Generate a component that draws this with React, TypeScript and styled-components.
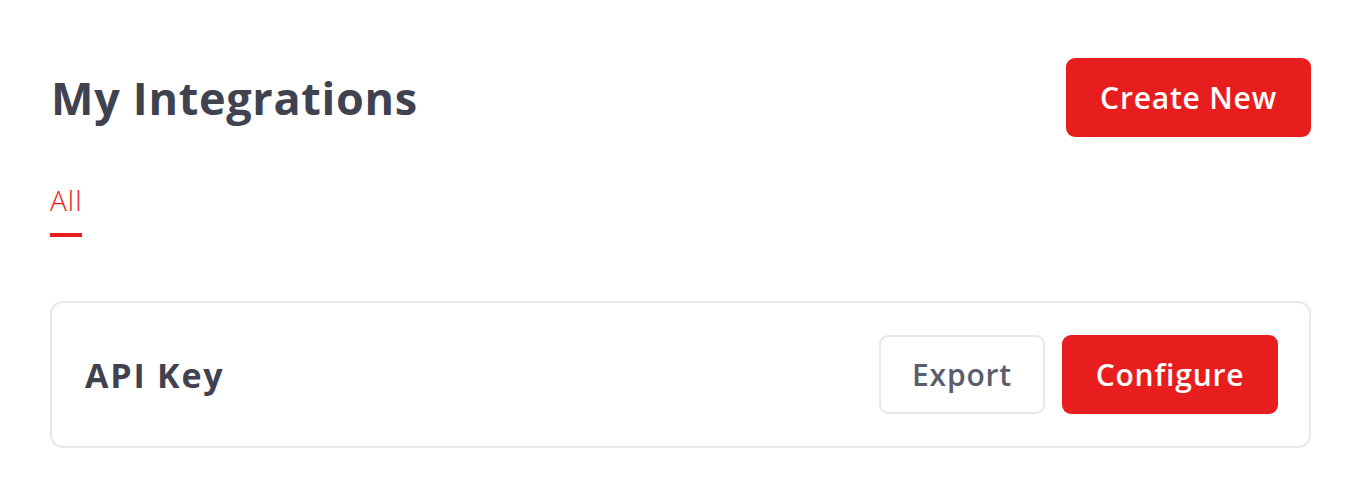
import React from "react";
import styled, { createGlobalStyle } from "styled-components";

const Global = createGlobalStyle`
  html, body { margin: 0; padding: 0; background: #ffffff; }
  body { font-family: "Open Sans", "Noto Sans", sans-serif; -webkit-font-smoothing: antialiased; }
  * { box-sizing: border-box; }
`;

const Page = styled.div`
  padding: 58px 59px 0 50px;
`;

const Header = styled.div`
  display: flex;
  align-items: center;
  justify-content: space-between;
`;

const Title = styled.h1`
  margin: 0;
  padding-left: 1px;
  font-size: 45px;
  font-weight: 700;
  color: #40434f;
  letter-spacing: 0.7px;
`;

const Button = styled.button<{ $variant: "primary" | "outline"; $w: number }>`
  display: inline-flex;
  align-items: center;
  justify-content: center;
  width: ${(p) => p.$w}px;
  height: 79px;
  padding: 0;
  border-radius: 9px;
  font-family: inherit;
  font-size: 30px;
  font-weight: 600;
  letter-spacing: 0.8px;
  cursor: pointer;
  background: ${(p) => (p.$variant === "primary" ? "#e81d1d" : "#ffffff")};
  color: ${(p) => (p.$variant === "primary" ? "#ffffff" : "#5a5e6c")};
  border: ${(p) => (p.$variant === "primary" ? "none" : "2px solid #e7e7ec")};
`;

const Tabs = styled.div`
  display: flex;
  margin-top: 47px;
`;

const Tab = styled.div<{ $active?: boolean }>`
  display: flex;
  flex-direction: column;
  font-size: 28px;
  font-weight: 300;
  letter-spacing: 1px;
  color: ${(p) => (p.$active ? "#e81d1d" : "#5a5e6c")};
  line-height: 32px;
  &::after {
    content: "";
    display: block;
    height: 4px;
    margin-top: 17px;
    background: ${(p) => (p.$active ? "#e81d1d" : "transparent")};
  }
`;

const Card = styled.div`
  margin-top: 64px;
  border: 2px solid #e7e7ec;
  border-radius: 13px;
  padding: 32px 31px 32px 33px;
  display: flex;
  align-items: center;
  justify-content: space-between;
`;

const CardTitle = styled.div`
  font-size: 34px;
  font-weight: 700;
  color: #40434f;
  letter-spacing: 1.8px;
`;

const Actions = styled.div`
  display: flex;
  gap: 17px;
`;

export default function App() {
  return (
    <>
      <Global />
      <Page>
        <Header>
          <Title>My Integrations</Title>
          <Button $variant="primary" $w={245}>Create New</Button>
        </Header>
        <Tabs>
          <Tab $active>All</Tab>
        </Tabs>
        <Card>
          <CardTitle>API Key</CardTitle>
          <Actions>
            <Button $variant="outline" $w={166}>Export</Button>
            <Button $variant="primary" $w={216}>Configure</Button>
          </Actions>
        </Card>
      </Page>
    </>
  );
}
